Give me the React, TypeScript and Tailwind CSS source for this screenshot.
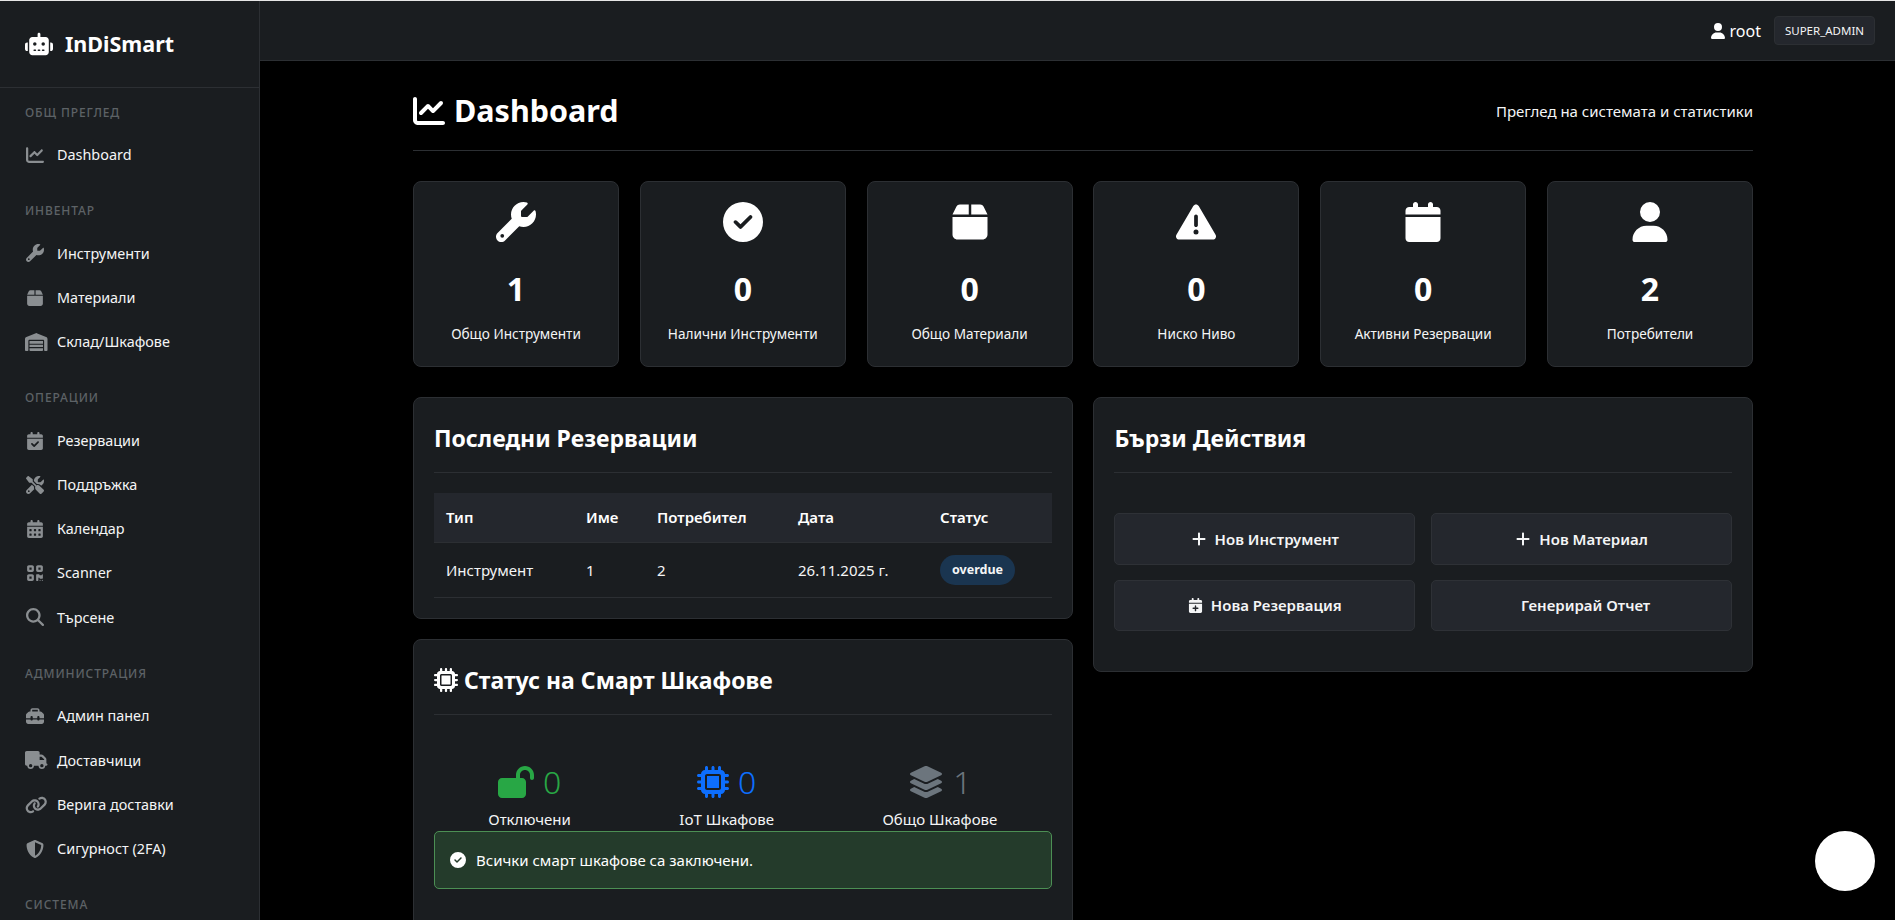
import {
  FaCalendar,
  FaCalendarCheck,
  FaCalendarDays,
  FaCalendarPlus,
  FaChartLine,
  FaCircleCheck,
  FaLayerGroup,
  FaLink,
  FaLockOpen,
  FaMagnifyingGlass,
  FaMicrochip,
  FaPlus,
  FaQrcode,
  FaRobot,
  FaScrewdriverWrench,
  FaShieldHalved,
  FaToolbox,
  FaTriangleExclamation,
  FaTruck,
  FaUser,
  FaWarehouse,
  FaWrench,
  FaBox,
} from "react-icons/fa6";

const NAV = [
  { title: "ОБЩ ПРЕГЛЕД", items: [{ label: "Dashboard", icon: FaChartLine }] },
  {
    title: "ИНВЕНТАР",
    items: [
      { label: "Инструменти", icon: FaWrench },
      { label: "Материали", icon: FaBox },
      { label: "Склад/Шкафове", icon: FaWarehouse, wide: true },
    ],
  },
  {
    title: "ОПЕРАЦИИ",
    items: [
      { label: "Резервации", icon: FaCalendarCheck },
      { label: "Поддръжка", icon: FaScrewdriverWrench },
      { label: "Календар", icon: FaCalendarDays },
      { label: "Scanner", icon: FaQrcode },
      { label: "Търсене", icon: FaMagnifyingGlass },
    ],
  },
  {
    title: "АДМИНИСТРАЦИЯ",
    items: [
      { label: "Админ панел", icon: FaToolbox },
      { label: "Доставчици", icon: FaTruck, wide: true },
      { label: "Верига доставки", icon: FaLink, wide: true },
      { label: "Сигурност (2FA)", icon: FaShieldHalved },
    ],
  },
  { title: "СИСТЕМА", items: [] },
];

const STATS = [
  { value: "1", label: "Общо Инструменти", icon: FaWrench },
  { value: "0", label: "Налични Инструменти", icon: FaCircleCheck },
  { value: "0", label: "Общо Материали", icon: FaBox },
  { value: "0", label: "Ниско Ниво", icon: FaTriangleExclamation },
  { value: "0", label: "Активни Резервации", icon: FaCalendar },
  { value: "2", label: "Потребители", icon: FaUser },
];

const COLUMNS = [
  { label: "Тип", width: "w-[140px]", value: "Инструмент" },
  { label: "Име", width: "w-[71px]", value: "1" },
  { label: "Потребител", width: "w-[141px]", value: "2" },
  { label: "Дата", width: "w-[142px]", value: "26.11.2025 г." },
];

function Sidebar() {
  return (
    <aside className="flex h-full w-[260px] shrink-0 flex-col overflow-hidden border-r border-[#2c2f33] bg-[#1a1d20]">
      <div className="flex h-[87px] shrink-0 items-center gap-3 border-b border-[#2c2f33] pl-[25px]">
        <FaRobot className="text-[28px] text-white" />
        <span className="text-[21.5px] font-bold text-white">InDiSmart</span>
      </div>
      <nav className="flex flex-col">
        {NAV.map((section) => (
          <div key={section.title} className="mb-[10px]">
            <div className="flex h-[44.6px] items-center pl-[25px] pt-[5px] pb-[0.6px] text-[12px] font-medium tracking-[0.9px] text-[#5d6266]">
              {section.title}
            </div>
            {section.items.map((item) => (
              <div key={item.label} className="flex h-[44.2px] items-center pl-[25px] text-[14.4px] text-[#f4f5f6]">
                <span className="flex w-[32px] shrink-0 items-center">
                  {item.wide ? (
                    <item.icon className="h-[18px] w-[22.5px] text-[#8a8e91]" />
                  ) : (
                    <item.icon className="ml-[1px] text-[18px] text-[#8a8e91]" />
                  )}
                </span>
                {item.label}
              </div>
            ))}
          </div>
        ))}
      </nav>
    </aside>
  );
}

function Card({ title, icon, className, children }: { title: string; icon?: React.ReactNode; className?: string; children: React.ReactNode }) {
  return (
    <section className={`rounded-[8px] border border-[#2c2f33] bg-[#1a1d20] p-[20px] ${className ?? ""}`}>
      <h2 className="flex h-[55px] items-center gap-[6px] border-b border-[#2c2f33] pb-[14px] text-[23px] font-bold text-white">
        {icon}
        {title}
      </h2>
      {children}
    </section>
  );
}

function ActionButton({ icon, label }: { icon?: React.ReactNode; label: string }) {
  return (
    <button className="flex h-[51.5px] items-center justify-center gap-[8px] rounded-[5px] border border-[#2e3136] bg-[#24272d] text-[15px] font-semibold text-[#f4f5f6]">
      {icon}
      <span className={icon ? "" : "ml-[8px]"}>{label}</span>
    </button>
  );
}

function LockerStat({ icon, value, label, color }: { icon: React.ReactNode; value: string; label: string; color: string }) {
  return (
    <div className="flex flex-col items-center">
      <div className={`flex h-[44px] items-center gap-[9px] text-[32px] font-light ${color}`}>
        {icon}
        {value}
      </div>
      <div className="mt-[4px] text-[15px] leading-[23px] text-[#f4f5f6]">{label}</div>
    </div>
  );
}

export default function App() {
  return (
    <div className="flex h-screen flex-col overflow-hidden bg-black font-['Noto_Sans',sans-serif] text-white">
      <div className="h-px shrink-0 bg-[#e6e6e6]" />
      <div className="flex min-h-0 flex-1">
        <Sidebar />
        <div className="flex min-w-0 flex-1 flex-col">
          <header className="flex h-[60px] shrink-0 items-center justify-end gap-[13px] border-b border-[#2c2f33] bg-[#1a1d20] pr-[20px]">
            <div className="flex items-center gap-[4px] text-[16px]">
              <FaUser className="text-[16px]" />
              root
            </div>
            <span className="flex h-[29px] w-[101px] items-center justify-center rounded-[4px] border border-[#2c2f33] bg-[#24272d] text-[11.5px] text-[#f4f5f6]">
              SUPER_ADMIN
            </span>
          </header>

          <main className="relative min-h-0 flex-1 overflow-hidden pl-[153px] pr-[142px]">
            {/* Page title */}
            <div className="flex h-[90px] items-center justify-between border-b border-[#2c2f33] pt-[11px]">
              <h1 className="flex items-center gap-[9px] text-[30.5px] font-bold">
                <FaChartLine className="text-[32px]" />
                Dashboard
              </h1>
              <p className="text-[15px] text-[#f4f5f6]">Преглед на системата и статистики</p>
            </div>

            {/* Stats */}
            <div className="mt-[30px] grid grid-cols-6 gap-[20.8px]">
              {STATS.map((stat) => (
                <div key={stat.label} className="flex h-[186px] flex-col items-center rounded-[8px] border border-[#2c2f33] bg-[#1a1d20] pt-[20px]">
                  <stat.icon className="h-[40px] text-[40px]" />
                  <div className="mt-[25px] text-[32px] leading-[44px] font-bold">{stat.value}</div>
                  <div className="mt-[13px] text-[13.6px] text-[#f4f5f6]">{stat.label}</div>
                </div>
              ))}
            </div>

            {/* Content */}
            <div className="mt-[30px] grid grid-cols-2 gap-[20.8px]">
              <div className="flex flex-col gap-[20px]">
                <Card title="Последни Резервации" className="h-[222px]">
                  <div className="mt-[20px] text-[15px]">
                    <div className="flex h-[50px] items-center border-b border-[#2c2f33] bg-[#24272d] font-semibold">
                      {COLUMNS.map((col) => (
                        <div key={col.label} className={`${col.width} px-[12px]`}>{col.label}</div>
                      ))}
                      <div className="px-[12px]">Статус</div>
                    </div>
                    <div className="flex h-[55px] items-center border-b border-[#2c2f33] text-[#f4f5f6]">
                      {COLUMNS.map((col) => (
                        <div key={col.label} className={`${col.width} px-[12px]`}>{col.value}</div>
                      ))}
                      <div className="px-[12px]">
                        <span className="flex h-[30px] w-[75px] items-center justify-center rounded-full bg-[#1a3550] text-[12.5px] font-bold">overdue</span>
                      </div>
                    </div>
                  </div>
                </Card>

                <Card title="Статус на Смарт Шкафове" icon={<FaMicrochip className="text-[24px]" />} className="h-[400px]">
                  <div className="mt-[45px] flex justify-around">
                    <LockerStat icon={<FaLockOpen className="h-[32px] w-[36px]" />} value="0" label="Отключени" color="text-[#28a745]" />
                    <LockerStat icon={<FaMicrochip />} value="0" label="IoT Шкафове" color="text-[#0d6efd]" />
                    <LockerStat icon={<FaLayerGroup className="h-[32px] w-[36px]" />} value="1" label="Общо Шкафове" color="text-[#6c757d]" />
                  </div>
                  <div className="flex h-[58px] items-center gap-[10px] rounded-[5px] border border-[#4c8f54] bg-[#243b2b] px-[15px] text-[15px]">
                    <FaCircleCheck className="text-[16px]" />
                    Всички смарт шкафове са заключени.
                  </div>
                </Card>
              </div>

              <Card title="Бързи Действия" className="h-[275px] self-start">
                <div className="mt-[40px] grid grid-cols-2 gap-x-[16px] gap-y-[15px]">
                  <ActionButton icon={<FaPlus className="text-[16px]" />} label="Нов Инструмент" />
                  <ActionButton icon={<FaPlus className="text-[16px]" />} label="Нов Материал" />
                  <ActionButton icon={<FaCalendarPlus className="text-[15px]" />} label="Нова Резервация" />
                  <ActionButton label="Генерирай Отчет" />
                </div>
              </Card>
            </div>

            <div className="absolute right-[20px] bottom-[29px] h-[60px] w-[60px] rounded-full bg-white" />
          </main>
        </div>
      </div>
    </div>
  );
}
